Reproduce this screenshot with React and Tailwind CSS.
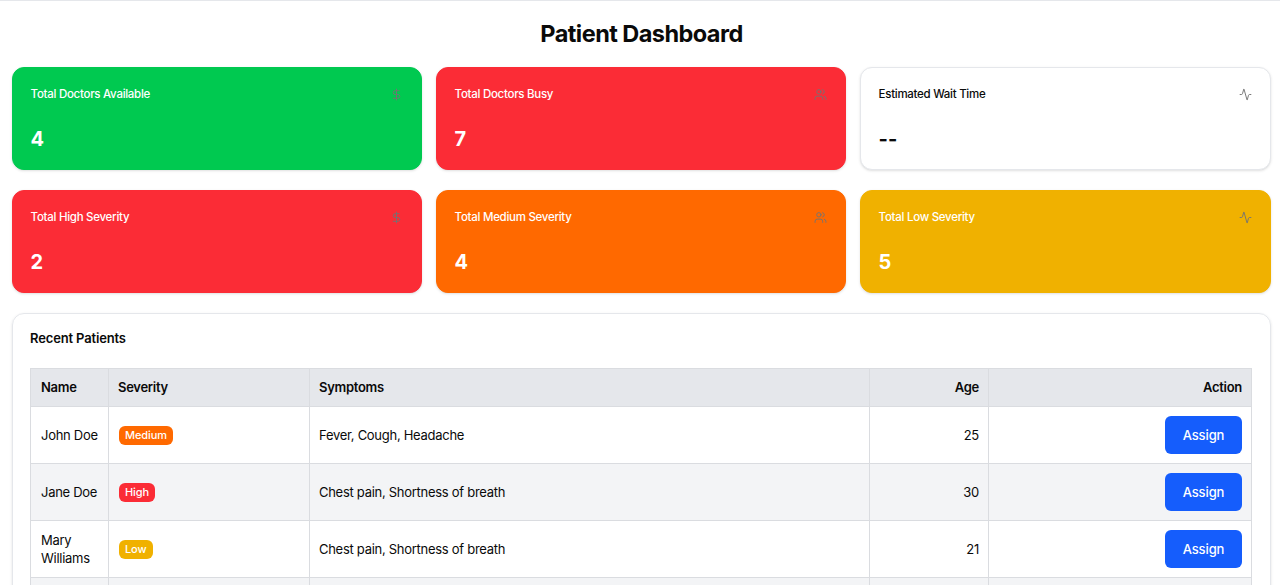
import React from "react";
import { DollarSign, Users, Activity } from "lucide-react";

const cards = [
  { t: "Total Doctors Available", v: "4", I: DollarSign, c: "bg-[#00c950] text-white border-[#00c950]" },
  { t: "Total Doctors Busy", v: "7", I: Users, c: "bg-[#fb2c36] text-white border-[#fb2c36]" },
  { t: "Estimated Wait Time", v: "--", I: Activity, c: "bg-white text-[#0a0a0a] border-[#e5e7eb]" },
  { t: "Total High Severity", v: "2", I: DollarSign, c: "bg-[#fb2c36] text-white border-[#fb2c36]" },
  { t: "Total Medium Severity", v: "4", I: Users, c: "bg-[#ff6900] text-white border-[#ff6900]" },
  { t: "Total Low Severity", v: "5", I: Activity, c: "bg-[#f0b100] text-white border-[#f0b100]" },
];

const rows = [
  { n: "John Doe", s: "Medium", sc: "bg-[#ff6900]", d: "Fever, Cough, Headache", a: 25 },
  { n: "Jane Doe", s: "High", sc: "bg-[#fb2c36]", d: "Chest pain, Shortness of breath", a: 30 },
  { n: "Mary Williams", s: "Low", sc: "bg-[#f0b100]", d: "Chest pain, Shortness of breath", a: 21 },
  { n: "Robert Brown", s: "Medium", sc: "bg-[#ff6900]", d: "Fever, Cough, Headache", a: 45 },
];

const line = "border border-[#dadce0]";

export default function App() {
  return (
    <div className="h-screen overflow-hidden bg-white border-t border-[#e5e7eb] text-[#0a0a0a] font-['Inter',sans-serif]">
      <div className="pl-3 pr-[9px]">
        <h1 className="text-center text-[23.5px] tracking-[-0.55px] font-bold leading-8 pt-[17px] pb-[17px]">Patient Dashboard</h1>
        <div className="grid grid-cols-[410px_410px_411px] gap-x-[14px] gap-y-5">
          {cards.map(({ t, v, I, c }) => (
            <div key={t} className={`h-[103px] rounded-xl border shadow-sm pl-[17.6px] pr-[17px] pt-[18px] ${c}`}>
              <div className="flex items-center justify-between h-4">
                <span className="text-[11.5px] tracking-[-0.28px] font-medium leading-4">{t}</span>
                <I className="w-[13px] h-[13px] text-[#737373] mr-px" strokeWidth={1.75} />
              </div>
              <div className="text-xl font-bold leading-7 mt-[23px]">{v}</div>
            </div>
          ))}
        </div>
        <div className="mt-5 rounded-xl border border-[#e5e7eb] shadow-sm px-[17px] pt-4 pb-6">
          <h2 className="text-[13px] tracking-[-0.15px] font-semibold leading-4 mb-[22px]">Recent Patients</h2>
          <table className={`w-[1221px] table-fixed border-collapse ${line} text-[13px] tracking-[-0.28px] leading-[18.5px]`}>
            <colgroup>
              <col className="w-[78px]" />
              <col className="w-[201px]" />
              <col className="w-[560px]" />
              <col className="w-[119px]" />
              <col className="w-[263px]" />
            </colgroup>
            <thead>
              <tr className="bg-[#e5e7eb] h-[38px]">
                <th className={`${line} px-[10px] text-left font-semibold`}>Name</th>
                <th className={`${line} px-[9px] text-left font-semibold`}>Severity</th>
                <th className={`${line} px-[9px] text-left font-semibold`}>Symptoms</th>
                <th className={`${line} px-[9px] text-right font-semibold`}>Age</th>
                <th className={`${line} px-[9px] text-right font-semibold`}>Action</th>
              </tr>
            </thead>
            <tbody>
              {rows.map((r, i) => (
                <tr key={r.n} className={`h-[57px] ${i % 2 ? "bg-[#f3f4f6]" : "bg-white"}`}>
                  <td className={`${line} px-[10px]`}>{r.n}</td>
                  <td className={`${line} px-[9px]`}>
                    <span className={`inline-block ml-px rounded-md px-[6px] text-[11px] tracking-[-0.1px] font-medium leading-[19px] text-white ${r.sc}`}>{r.s}</span>
                  </td>
                  <td className={`${line} px-[9px]`}>{r.d}</td>
                  <td className={`${line} px-[9px] text-right`}>{r.a}</td>
                  <td className={`${line} px-[9px] text-right`}>
                    <button className="inline-block align-middle w-[77px] h-[38px] rounded-md bg-[#155dfc] text-white text-[13px] tracking-[-0.1px] font-medium">Assign</button>
                  </td>
                </tr>
              ))}
            </tbody>
          </table>
        </div>
      </div>
    </div>
  );
}
